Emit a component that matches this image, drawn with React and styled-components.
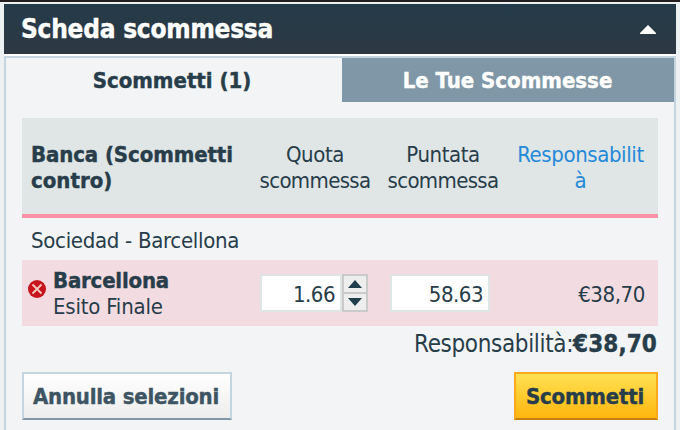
import React, { useState } from 'react';
import styled, { createGlobalStyle } from 'styled-components';

const GlobalStyle = createGlobalStyle`
  * {
    box-sizing: border-box;
  }

  body {
    margin: 0;
    background: #eef1f1;
  }
`;

const Page = styled.div`
  display: flex;
  flex-direction: column;

  height: 430px;
  padding: 2px 4px 0;
  border-top: 2px solid #231f20;

  font-family: 'DejaVu Sans Condensed', 'DejaVu Sans', sans-serif;
  font-stretch: condensed;
  font-size: 22px;
  line-height: 26px;
  color: #283d4a;
  white-space: nowrap;
`;

const Text = styled.span`
  letter-spacing: ${({ $track = 0 }) => $track}px;
  font-weight: ${({ $bold }) => ($bold ? 700 : 400)};
  -webkit-text-stroke: ${({ $bold }) => ($bold ? '0.4px' : '0')};
`;

const Header = styled.header`
  display: flex;
  align-items: center;
  justify-content: space-between;

  flex: none;
  height: 50px;
  padding: 0 20px 0 17px;

  font-size: 26px;
  color: #ffffff;
  background: linear-gradient(#243b49, #2d3842);
`;

const Panel = styled.main`
  flex: 1;
  min-height: 0;
  margin-top: 2px;

  background: #f2f4f6;
  border: 2px solid #c5d5e0;
  border-bottom: 0;
  box-shadow: 0 -2px 0 #ffffff;
`;

const Tabs = styled.nav`
  display: grid;
  grid-template-columns: 336px 332px;
  height: 44px;
`;

const Tab = styled.div`
  display: flex;
  align-items: center;
  justify-content: center;

  padding: 2px ${({ $active }) => ($active ? '4px' : '1px')} 0 0;

  color: ${({ $active }) => ($active ? '#283d4a' : '#ffffff')};
  background: ${({ $active }) => ($active ? 'transparent' : '#7f97a6')};
`;

const Slip = styled.section`
  width: 636px;
  margin: 16px 0 0 16px;
`;

const Columns = styled.div`
  display: grid;
  grid-template-columns: 229px 128px 128px 151px;
`;

const HeadRow = styled(Columns)`
  height: 100px;
  padding-top: 24px;

  background: #e0e6e6;
  border-bottom: 4px solid #fb92a8;
`;

const HeadCell = styled.div`
  display: flex;
  flex-direction: column;
  align-items: ${({ $align = 'center' }) => $align};

  padding: ${({ $pad = '0' }) => $pad};
  color: ${({ $link }) => ($link ? '#2589d8' : 'inherit')};
`;

const EventName = styled.div`
  height: 42px;
  padding: 10px 0 0 9px;
`;

const BetRow = styled.div`
  display: flex;
  align-items: center;

  height: 66px;
  padding: 0 13px 0 6px;

  background: #f3dce1;
`;

const Remove = styled.svg`
  flex: none;
  width: 18px;
  height: 18px;
  margin-bottom: 8px;
`;

const Selection = styled.div`
  display: flex;
  flex-direction: column;

  width: 214px;
  padding-left: 7px;
  margin-top: 2px;
`;

const Field = styled.div`
  display: flex;
  align-items: center;
  justify-content: flex-end;

  width: ${({ $width }) => $width}px;
  height: 38px;
  padding: 4px 5px 0 0;

  background: #ffffff;
  border: 2px solid #e0e6e6;
`;

const Stepper = styled.div`
  display: flex;
  flex-direction: column;
  gap: 2px;

  width: 26px;
  height: 38px;
  padding: 2px;
  margin-right: 22px;

  background: #cacaca;
`;

const Step = styled.button`
  display: flex;
  align-items: center;
  justify-content: center;

  flex: 1;
  padding: 0;

  background: #eeeeee;
  border: 0;
`;

const Amount = styled.div`
  flex: 1;
  padding-top: 4px;
  text-align: right;
`;

const Total = styled.div`
  height: 46px;
  padding: 5px 1px 0 0;

  font-size: 24px;
  text-align: right;
`;

const Actions = styled.footer`
  display: flex;
  justify-content: space-between;
`;

const Button = styled.button`
  display: flex;
  align-items: center;
  justify-content: center;

  width: ${({ $width }) => $width}px;
  height: 48px;
  padding: 2px 2px 0 0;

  font: inherit;
  color: ${({ $primary }) => ($primary ? '#283d4a' : '#3d5463')};
  background: ${({ $primary }) =>
    $primary
      ? 'linear-gradient(#ffe153, #ffb60d)'
      : 'linear-gradient(#ffffff, #ededee)'};
  border: 2px solid ${({ $primary }) => ($primary ? '#fda81e' : '#c5d5e0')};
  border-bottom-color: ${({ $primary }) => ($primary ? '#c5800f' : '#7f97a6')};
`;

const columns = [
  { lines: [['Quota', -0.4], ['scommessa', -0.65]] },
  { lines: [['Puntata', -0.45], ['scommessa', -0.65]] },
  { lines: [['Responsabilit', -0.4], ['à', 0]], link: true, pad: '0 4px 0 0' }
];

const App = () => {
  const [odds, setOdds] = useState(1.66);
  const step = amount => setOdds(value => value + amount);

  return (
    <>
      <GlobalStyle />
      <Page>
        <Header>
          <Text $bold $track={-0.25}>Scheda scommessa</Text>
          <svg width="16" height="9" viewBox="0 0 16 9">
            <path d="M0 8 L8 0 L16 8 V9 H0 Z" fill="#ffffff" />
          </svg>
        </Header>
        <Panel>
          <Tabs>
            <Tab $active>
              <Text $bold>Scommetti (1)</Text>
            </Tab>
            <Tab>
              <Text $bold>Le Tue Scommesse</Text>
            </Tab>
          </Tabs>
          <Slip>
            <HeadRow>
              <HeadCell $align="flex-start" $pad="0 0 0 9px">
                <Text $bold $track={-0.1}>Banca (Scommetti</Text>
                <Text $bold>contro)</Text>
              </HeadCell>
              {columns.map(({ lines, link, pad }) => (
                <HeadCell key={lines[0][0]} $link={link} $pad={pad}>
                  {lines.map(([text, track]) => (
                    <Text key={text} $track={track}>{text}</Text>
                  ))}
                </HeadCell>
              ))}
            </HeadRow>
            <EventName>
              <Text $track={-0.3}>Sociedad - Barcellona</Text>
            </EventName>
            <BetRow>
              <Remove viewBox="0 0 18 18">
                <circle cx="9" cy="9" r="9" fill="#c8141c" />
                <path d="M4.5 4.5 L13.5 13.5 M13.5 4.5 L4.5 13.5" stroke="#f6c9c0" strokeWidth="1.8" />
              </Remove>
              <Selection>
                <Text $bold $track={-0.2}>Barcellona</Text>
                <Text $track={-0.2}>Esito Finale</Text>
              </Selection>
              <Field $width={82}>
                <Text $track={-0.5}>{odds.toFixed(2)}</Text>
              </Field>
              <Stepper>
                <Step onClick={() => step(0.01)}>
                  <svg width="14" height="8" viewBox="0 0 14 8">
                    <path d="M0 8 L7 0 L14 8 Z" fill="#203e4b" />
                  </svg>
                </Step>
                <Step onClick={() => step(-0.01)}>
                  <svg width="14" height="8" viewBox="0 0 14 8">
                    <path d="M0 0 H14 L7 8 Z" fill="#203e4b" />
                  </svg>
                </Step>
              </Stepper>
              <Field $width={100}>
                <Text $track={-0.5}>58.63</Text>
              </Field>
              <Amount>
                <Text $track={-0.4}>€38,70</Text>
              </Amount>
            </BetRow>
            <Total>
              <Text $track={-0.35}>Responsabilità:</Text>
              <Text $bold $track={0.1}>€38,70</Text>
            </Total>
            <Actions>
              <Button $width={210}>
                <Text $bold $track={-0.2}>Annulla selezioni</Text>
              </Button>
              <Button $primary $width={144}>
                <Text $bold $track={-0.2}>Scommetti</Text>
              </Button>
            </Actions>
          </Slip>
        </Panel>
      </Page>
    </>
  );
};

export default App;
